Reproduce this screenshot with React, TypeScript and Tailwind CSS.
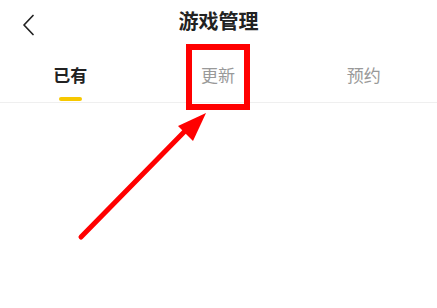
const tabs = [
  { label: "已有", active: true },
  { label: "更新", active: false },
  { label: "预约", active: false },
];

const App = () => {
  return (
    <div
      className="relative w-[437px] h-[308px] bg-white overflow-hidden"
      style={{ fontFamily: '"Noto Sans CJK SC", "Noto Sans", sans-serif' }}
    >
      {/* 顶部标题栏 */}
      <header className="relative h-[44px] flex items-center justify-center">
        <button className="absolute left-[20px] top-[13px] w-[16px] h-[24px] flex items-center justify-center">
          <svg width="12" height="22" viewBox="0 0 12 22" fill="none">
            <path d="M11 1.5 L2 11 L11 20.5" stroke="#222" strokeWidth="1.7" strokeLinecap="round" strokeLinejoin="round" />
          </svg>
        </button>
        <h1 className="text-[20px] leading-[28px] font-bold text-[#222] mt-[-2px]">游戏管理</h1>
      </header>

      {/* 标签页 */}
      <nav className="grid grid-cols-3 border-b border-[#efefef]">
        {tabs.map((t) => (
          <div key={t.label} className="flex flex-col items-center pt-[19px] pb-[1px]">
            <span
              className={
                t.active
                  ? "text-[17px] leading-[24px] font-bold text-[#222] mr-[5px]"
                  : "text-[17px] leading-[24px] text-[#999] mr-[1px]"
              }
            >
              {t.label}
            </span>
            <span
              className={
                t.active
                  ? "mt-[10px] h-[4px] w-[23px] rounded-full bg-[#f7c800] mr-[5px]"
                  : "mt-[10px] h-[4px] w-[23px]"
              }
            />
          </div>
        ))}
      </nav>

      {/* 红色标注框 */}
      <div className="absolute left-[186px] top-[44px] w-[64px] h-[66px] border-[6px] border-[#ff0000]" />

      {/* 红色箭头 */}
      <svg className="absolute left-0 top-0" width="437" height="308" viewBox="0 0 437 308">
        <line x1="81" y1="237" x2="186" y2="130" stroke="#ff0000" strokeWidth="5" strokeLinecap="round" />
        <polygon points="206,113 178,126 193,141" fill="#ff0000" />
      </svg>
    </div>
  );
};

export default App;
